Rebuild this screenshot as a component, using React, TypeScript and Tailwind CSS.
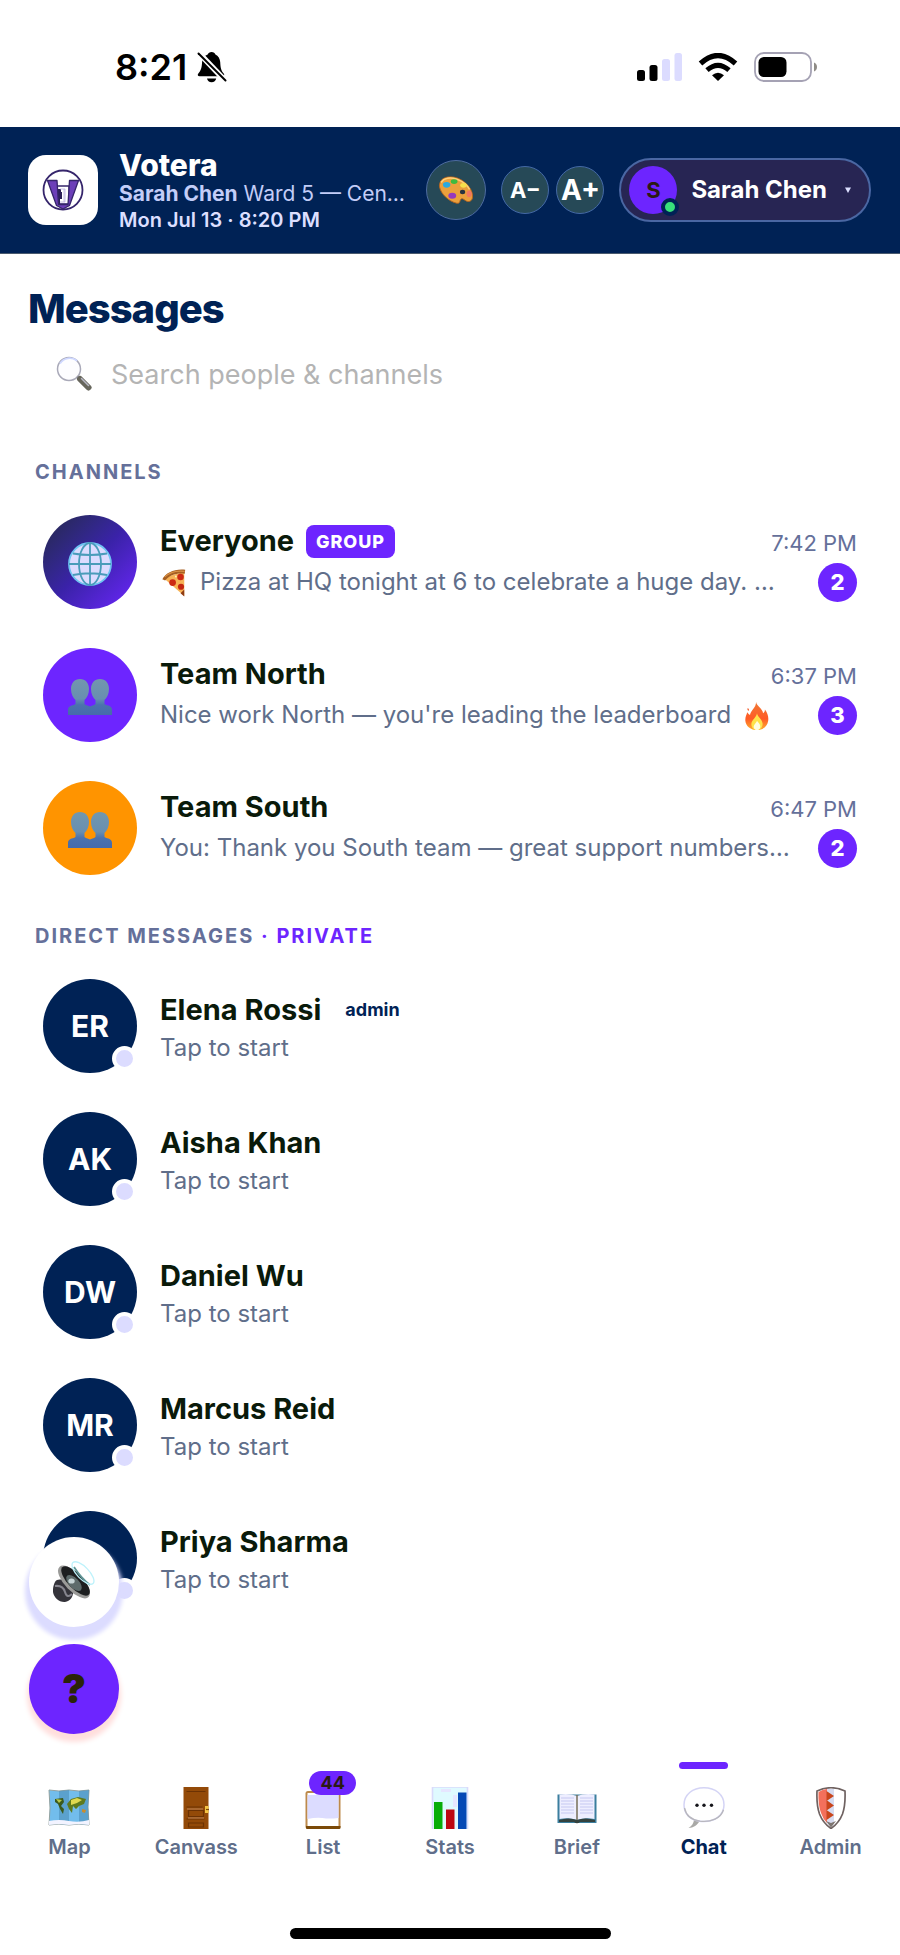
import React, { useState } from 'react';

interface Channel {
  name: string;
  group?: boolean;
  time: string;
  preview: React.ReactNode;
  unread: number;
  avatarClass: string;
  icon: React.ReactNode;
}

interface Contact {
  name: string;
  initials: string;
  role?: string;
}

const BellOffIcon = ({ className }: { className?: string }) => (
  <svg viewBox="0 0 30 32" className={className} aria-hidden="true">
    <path
      d="M14.6 1c-2 0-3.3 1-3.9 2.4C7 4.7 5.3 7.6 5.1 11c-.3 6-1.2 8.5-3.6 11.2-1.3 1.4-.8 3 1 3h23c1.800 0 2.300-1.600 1-3-2.400-2.700-3-5.200-3.300-11.200-.2-3.400-1.900-6.300-4.800-7.600C17.900 2 16.600 1 14.600 1zM10 27.500h9.200c-.4 2.300-2.200 3.700-4.600 3.700S10.400 29.800 10 27.500z"
      fill="#000"
    />
    <path d="M1.500 1.500L28.500 30" stroke="#fff" strokeWidth="5.5" />
    <path d="M1.500 2.500L28.500 29.500" stroke="#000" strokeWidth="2" strokeLinecap="round" />
  </svg>
);

const SignalIcon = ({ className }: { className?: string }) => (
  <svg viewBox="0 0 45 28" className={className} aria-hidden="true">
    <rect x="0" y="17" width="8" height="11" rx="2.5" fill="#000" />
    <rect x="12.5" y="12" width="8" height="16" rx="2.5" fill="#000" />
    <rect x="25" y="6" width="8" height="22" rx="2.5" fill="#dcdcff" />
    <rect x="37.5" y="0" width="7.5" height="28" rx="2.5" fill="#dcdcff" />
  </svg>
);

const WifiIcon = ({ className }: { className?: string }) => (
  <svg viewBox="0 0 40 28" className={className} aria-hidden="true">
    <path d="M2.500 10.500Q20-5.500 37.500 10.500" fill="none" stroke="#000" strokeWidth="5.2" />
    <path d="M9 17.200Q20 7.500 31 17.200" fill="none" stroke="#000" strokeWidth="5" />
    <path d="M14 22.300Q20 17.300 26 22.300L20 28z" fill="#000" />
  </svg>
);

const BatteryIcon = ({ className }: { className?: string }) => (
  <svg viewBox="0 0 64 30" className={className} aria-hidden="true">
    <rect x="1" y="1" width="56" height="28" rx="9" fill="#fff" stroke="#a5a2b4" strokeWidth="1.8" />
    <rect x="4.5" y="5" width="28" height="20" rx="5.5" fill="#000" />
    <path d="M60 10.500c4 1 4 8 0 9z" fill="#8f8c86" />
  </svg>
);

const LogoMark = ({ className }: { className?: string }) => (
  <svg viewBox="0 0 42 42" className={className} aria-hidden="true">
    <circle cx="21" cy="21" r="19.5" fill="#fff" stroke="#35256b" strokeWidth="1.8" />
    <path d="M15 17h12v18H15z" fill="#fff" stroke="#35256b" strokeWidth="1.3" />
    <path d="M15 20h4v3h1v7h-2v5h-3z" fill="#2c2058" />
    <path d="M18 20h5v13h-5M22 20v13" fill="none" stroke="#b9aee0" strokeWidth="0.8" />
    <path d="M5.500 11.500h9.500l1.500 24h9.500l1.500-24h9l-9 25-6.500 3.500-6.500-3.500z" fill="#6c3fb8" stroke="#35256b" strokeWidth="1.3" strokeLinejoin="round" />
  </svg>
);

const PaletteIcon = ({ className }: { className?: string }) => (
  <svg viewBox="0 0 38 32" className={className} aria-hidden="true">
    <path
      d="M2 8C4 2 13 .5 21 3.500c9 3.500 17 13 15.500 21-.6 3-3 4.500-6 3.500-2.500-1-4-3.500-6-2.500-2 1.500-.5 5.500-5 4.500C11 28 3 20 1.500 13c-.4-2 0-3.500.5-5z"
      fill="#eba03c"
      stroke="#b8641d"
      strokeWidth="1"
    />
    <path d="M3 8C6 3 13 2 20 4.500c6 2.200 11 6 13.500 11" fill="none" stroke="#ffd078" strokeWidth="1.6" />
    <ellipse cx="9" cy="10.5" rx="4" ry="3" fill="#2aa9e0" />
    <ellipse cx="17" cy="7" rx="3.6" ry="2.5" fill="#3dba3f" />
    <ellipse cx="27" cy="11" rx="3.5" ry="2.6" fill="#f7e04a" />
    <ellipse cx="33" cy="20" rx="2.8" ry="3.6" fill="#f2785f" />
    <ellipse cx="15" cy="22" rx="4.2" ry="3.2" fill="#9638bd" />
    <ellipse cx="26" cy="18" rx="2.8" ry="2.4" fill="#28333f" />
  </svg>
);

const SearchIcon = ({ className }: { className?: string }) => (
  <svg viewBox="0 0 36 36" className={className} aria-hidden="true">
    <circle cx="13" cy="13" r="11.5" fill="#fdfdff" stroke="#a9a9b8" strokeWidth="1.5" />
    <path d="M4 7.500A11.500 11.500 0 0 1 21 4.800" fill="none" stroke="#cfd8ff" strokeWidth="1.8" />
    <path d="M21 20.500l3 2.500" stroke="#9a9aa6" strokeWidth="2.5" />
    <path d="M24 23l8.500 8.500" stroke="#67665c" strokeWidth="6" strokeLinecap="round" />
    <path d="M25.500 22.500l7 7" stroke="#b9b9c6" strokeWidth="1.5" strokeLinecap="round" />
  </svg>
);

const GlobeIcon = ({ className }: { className?: string }) => (
  <svg viewBox="0 0 44 44" className={className} aria-hidden="true">
    <circle cx="22" cy="22" r="21" fill="#dcdcff" stroke="#6fc4f2" strokeWidth="1.8" />
    <g fill="none" stroke="#4a9cba" strokeWidth="1.8">
      <ellipse cx="22" cy="22" rx="11" ry="21" />
      <path d="M22 1v42M1 22h42M5 11.500Q22 14.500 39 11.500M5 33Q22 29.500 39 33" />
    </g>
  </svg>
);

const PeopleIcon = ({ className }: { className?: string }) => (
  <svg viewBox="0 0 44 36" className={className} aria-hidden="true">
    <defs>
      <linearGradient id="people" x1="0" y1="0" x2="0" y2="1">
        <stop offset="0" stopColor="#7297ae" />
        <stop offset="0.55" stopColor="#688fb0" />
        <stop offset="0.72" stopColor="#4b72ad" />
        <stop offset="1" stopColor="#466bab" />
      </linearGradient>
    </defs>
    <path
      d="M12 0c5.500 0 9 4 9 10 0 5-2 8.500-4.500 11v4c2 1.500 4 1.500 5.500 2.500 1.500-1 3.500-1 5.500-2.500v-4C25 18.500 23 15 23 10c0-6 3.500-10 9-10s9 4 9 10c0 5-2 8.500-4.500 11v4c3.500 2 7.500 1.500 7.500 6v5H0v-5c0-4.500 4-4 7.500-6v-4C5 18.500 3 15 3 10 3 4 6.500 0 12 0z"
      fill="url(#people)"
    />
  </svg>
);

const PizzaIcon = ({ className }: { className?: string }) => (
  <svg viewBox="0 0 26 30" className={className} aria-hidden="true">
    <path d="M1.500 9.500L24 3v26z" fill="#f7b356" />
    <path d="M24 22v7.500l-4-3.500z" fill="#8f3b12" />
    <path d="M.5 11C4 4 14-.5 25 .8l-.5 4.200C15 4 8 7 3.500 12.200z" fill="#a65f22" />
    <path d="M3 8.500C8 3.500 16 1.500 24.500 2.500" fill="none" stroke="#d99245" strokeWidth="1.2" />
    <circle cx="11.5" cy="14.5" r="3.6" fill="#cc2a14" />
    <circle cx="20" cy="8.5" r="3.5" fill="#cc2a14" />
    <circle cx="20.5" cy="19" r="3.3" fill="#c42812" />
    <circle cx="15" cy="8" r="1" fill="#fff0b5" />
  </svg>
);

const FireIcon = ({ className }: { className?: string }) => (
  <svg viewBox="0 0 26 30" className={className} aria-hidden="true">
    <defs>
      <linearGradient id="fire" x1="0" y1="0" x2="0" y2="1">
        <stop offset="0" stopColor="#f07a34" />
        <stop offset="0.6" stopColor="#ff5a26" />
        <stop offset="1" stopColor="#ffb02e" />
      </linearGradient>
    </defs>
    <path d="M12 0c1 5 7 7 7.500 12 1.500-.8 2-2.200 2-4 3 4 4 8 3.500 12-.8 6-5.500 10-12 10S1 26 .5 20c-.3-4 1.500-6.500 2-9 1 1.500 2 2.500 3 3C6 9 12 6.500 12 0z" fill="url(#fire)" />
    <path d="M13 12c.5 4 5.500 6 6 11 .3 4-2.500 7-6 7s-6.500-3-6-7c.5-4 5-6 6-11z" fill="#ffe24a" />
    <path d="M13 20c2 3 4 4 3.500 7-.3 2-1.800 3-3.500 3s-3.400-1-3.500-3c-.2-3 2.500-4 3.500-7z" fill="#fffde0" />
    <path d="M3 6.500q2 .5 1.500 3Q2 9.500 3 6.500z" fill="#f2673a" />
  </svg>
);

const SpeakerIcon = ({ className }: { className?: string }) => (
  <svg viewBox="0 0 42 42" className={className} aria-hidden="true">
    <path d="M2 21c2-3 6-3 9-1l9 9c1 5-2 11-8 12C5 41.500-1 35 0 28c.3-3 1-5 2-7z" fill="#34333a" />
    <path d="M2 25q8-1 10 6t7 2" fill="none" stroke="#86858e" strokeWidth="2" />
    <ellipse cx="21" cy="21" rx="21" ry="9" transform="rotate(46 21 21)" fill="#9a9a98" />
    <ellipse cx="22.5" cy="20" rx="19" ry="7.500" transform="rotate(46 22.500 20)" fill="#1d1f20" />
    <ellipse cx="21" cy="22" rx="10" ry="5" transform="rotate(46 21 22)" fill="#5d6b6b" />
    <ellipse cx="18.5" cy="20" rx="3.2" ry="2.600" fill="#c6d4d6" />
    <path d="M21 6q7 11 16 18" fill="none" stroke="#5f9595" strokeWidth="1.8" />
    <ellipse cx="30" cy="12" rx="14.5" ry="6" transform="rotate(46 30 12)" fill="none" stroke="#bdf2fb" strokeWidth="1.3" />
  </svg>
);

const MapIcon = ({ className }: { className?: string }) => (
  <svg viewBox="0 0 42 42" className={className} aria-hidden="true">
    <path d="M1 3l10 1 10-1 10 1 10-1-1 17 1 18-10-1-10 1-10-1-10 1 1-17z" fill="#72bdec" stroke="#93a2a0" strokeWidth="1" />
    <path d="M11 4l10-1v35l-10-1zM31 4l10-1-1 17 1 18-10-1z" fill="#4f92bd" opacity="0.65" />
    <path d="M1 34q10-2 20 0t20-1v5l-10-1-10 1-10-1-10 1z" fill="#f2f3ff" />
    <path d="M7 12l8-1 1 4-3 4 3 3-1 5-3-5-2-5-3-2z" fill="#3b5a1c" />
    <path d="M19 17l4-5 7-2 8 2-2 5-5 2-3 3-3-3-1 7-3-4z" fill="#5f7a1d" />
    <path d="M23 13l6-2 5 2-5 3-6 2z" fill="#e0d84f" />
    <path d="M8 12l6 1-3 3z" fill="#b9c94a" />
    <path d="M34 22l4 1-1 3-3-1z" fill="#c98d2e" />
  </svg>
);

const DoorIcon = ({ className }: { className?: string }) => (
  <svg viewBox="0 0 42 42" className={className} aria-hidden="true">
    <rect x="8.5" y="0" width="25" height="42" fill="#934a08" />
    <g fill="none" stroke="#6c3203" strokeWidth="1.2">
      <path d="M11.500 4.500h19M11.500 20h16M13.500 23.500h15v6h-15zM11.500 32h18M13.500 36h15v4h-15z" />
    </g>
    <path d="M12 22h16M13 31h16" stroke="#c38a60" strokeWidth="0.9" />
    <rect x="30" y="19" width="3.5" height="7" fill="#f3c444" />
    <path d="M31 22.500h3" stroke="#7b4a05" strokeWidth="1.2" />
  </svg>
);

const ListIcon = ({ className }: { className?: string }) => (
  <svg viewBox="0 0 42 42" className={className} aria-hidden="true">
    <rect x="3.5" y="4" width="35" height="38" rx="2.5" fill="#bd8a4c" />
    <rect x="5.5" y="6" width="31" height="33" fill="#fff" />
    <path d="M5.500 8h31v23q-10 1-16 0t-15 1z" fill="#dcdcff" />
    <path d="M4 39h34.500v2q0 1-1.500 1H5.500Q4 42 4 41z" fill="#7b4a08" />
  </svg>
);

const StatsIcon = ({ className }: { className?: string }) => (
  <svg viewBox="0 0 42 42" className={className} aria-hidden="true">
    <rect x="3.5" y="0" width="35" height="42" fill="#dffaff" />
    <path d="M3.500 0h35v42M3.500 0v42" fill="none" stroke="#d9dbfb" strokeWidth="1.6" />
    <path d="M12 2h10v3H12zM24 8h4v12h-4z" fill="#e6e6ff" />
    <rect x="5" y="15" width="8.5" height="27" fill="#08ad09" />
    <rect x="17" y="22.5" width="8.5" height="19.5" fill="#bd0812" />
    <rect x="29" y="5.5" width="8.5" height="36.5" fill="#0649b5" />
  </svg>
);

const BookIcon = ({ className }: { className?: string }) => (
  <svg viewBox="0 0 42 42" className={className} aria-hidden="true">
    <path d="M1.500 7.500h39V36H1.500z" fill="#3b7e9e" />
    <path d="M3.500 7.500Q13 6 21 9q8-3 17.500-1.500V32Q29 30 21 33q-8-3-17.500-1z" fill="#eeeeff" />
    <path d="M5 11h13M5 14h13M5 17h13M5 20h13M5 23h13M5 26h13M24 11h13M24 14h13M24 17h13M24 20h13M24 23h13M24 26h13" stroke="#c6c7f2" strokeWidth="1.1" />
    <path d="M21 8v25" stroke="#7e7664" strokeWidth="1.6" />
    <path d="M3 33q10-3 18 0 8-3 18 0v2H24q-3 2.500-6 0H3z" fill="#34423f" />
  </svg>
);

const ChatIcon = ({ className }: { className?: string }) => (
  <svg viewBox="0 0 42 42" className={className} aria-hidden="true">
    <path d="M11 32c0 4-2 7-5.500 9 5 0 9-3 11-7z" fill="#a9a9a6" />
    <path d="M21 .8c11.500 0 20 7 20 17s-8.500 16.700-20 16.700c-1.500 0-3 0-4.300-.3C7 33 1 27 1 17.800 1 7.800 9.500.8 21 .8z" fill="#fff" stroke="#d4d4f5" strokeWidth="1.5" />
    <path d="M1.500 21c1.500 7.500 7.500 12 15.500 13.200 11 1.300 21-3 23.500-11.500" fill="none" stroke="#b8b7bd" strokeWidth="1.3" />
    <g fill="#15151a">
      <circle cx="14" cy="18.3" r="1.7" />
      <circle cx="21" cy="18.3" r="1.7" />
      <circle cx="28.5" cy="18.3" r="1.7" />
    </g>
  </svg>
);

const ShieldIcon = ({ className }: { className?: string }) => (
  <svg viewBox="0 0 42 42" className={className} aria-hidden="true">
    <path d="M7 4Q21-2.500 35 4q.6 14-2.500 23Q29 36 21 41.500 13 36 9.500 27 6.400 18 7 4z" fill="#fff" stroke="#6f6261" strokeWidth="1.7" />
    <path d="M8.500 5Q13 2 18 1.800l-1 3V36Q13 32 11 26 8 18 8.500 5z" fill="#f3705c" />
    <path d="M17 2h7v35l-3 3-4-4z" fill="#d7dbf0" />
    <path d="M16.500 4l7.500 5-7.500 5zM16.500 13l7.500 5.500-7.500 5zM16.500 23l7.500 5-7.500 5z" fill="#c8461d" />
    <path d="M16 34l5 6.500 5-6.500-5 2z" fill="#7e7570" />
  </svg>
);

const channels: Channel[] = [
  {
    name: 'Everyone',
    group: true,
    time: '7:42 PM',
    preview: (
      <>
        <PizzaIcon className="mr-3 inline-block h-7 w-7 align-middle" />
        Pizza at HQ tonight at 6 to celebrate a huge day. …
      </>
    ),
    unread: 2,
    avatarClass: 'bg-linear-135 from-[#25264a] via-[#3a22a8] to-[#6d25ff]',
    icon: <GlobeIcon className="h-11 w-11" />,
  },
  {
    name: 'Team North',
    time: '6:37 PM',
    preview: (
      <>
        Nice work North — you're leading the leaderboard
        <FireIcon className="ml-3 inline-block h-7 w-7 align-middle" />
      </>
    ),
    unread: 3,
    avatarClass: 'bg-[#6d25ff]',
    icon: <PeopleIcon className="h-9 w-11" />,
  },
  {
    name: 'Team South',
    time: '6:47 PM',
    preview: 'You: Thank you South team — great support numbers…',
    unread: 2,
    avatarClass: 'bg-[#ff9400]',
    icon: <PeopleIcon className="h-9 w-11" />,
  },
];

const contacts: Contact[] = [
  { name: 'Elena Rossi', initials: 'ER', role: 'admin' },
  { name: 'Aisha Khan', initials: 'AK' },
  { name: 'Daniel Wu', initials: 'DW' },
  { name: 'Marcus Reid', initials: 'MR' },
  { name: 'Priya Sharma', initials: '' },
];

const tabs = [
  { label: 'Map', Icon: MapIcon },
  { label: 'Canvass', Icon: DoorIcon },
  { label: 'List', Icon: ListIcon, badge: 44 },
  { label: 'Stats', Icon: StatsIcon },
  { label: 'Brief', Icon: BookIcon },
  { label: 'Chat', Icon: ChatIcon },
  { label: 'Admin', Icon: ShieldIcon },
];

const StatusBar = () => (
  <div className="flex h-[127px] items-center justify-between pt-1.5 pr-[82px] pl-[115px]">
    <div className="flex items-center gap-2.5">
      <span className="text-4xl font-semibold text-black">8:21</span>
      <BellOffIcon className="h-8 w-[30px]" />
    </div>
    <div className="flex items-center gap-4">
      <SignalIcon className="h-7 w-[45px]" />
      <WifiIcon className="h-7 w-10" />
      <BatteryIcon className="h-[30px] w-16" />
    </div>
  </div>
);

const Header = () => (
  <header className="flex h-[127px] items-center gap-[15px] border-b border-[#4a5a6e] bg-[#002255] pr-[29px] pl-7">
    <div className="mr-1.5 flex h-[70px] w-[70px] shrink-0 items-center justify-center rounded-[18px] bg-white">
      <LogoMark className="h-[42px] w-[42px]" />
    </div>
    <div className="min-w-0 flex-1 pt-0.5">
      <div className="text-3xl leading-[32px] font-extrabold text-white">Votera</div>
      <div className="truncate text-[21px] leading-[26px] text-[#c3cdf8]">
        <span className="font-bold">Sarah Chen</span> Ward 5 — Cen…
      </div>
      <div className="text-xl leading-[26px] font-semibold text-[#dcdfff]">Mon Jul 13 · 8:20 PM</div>
    </div>
    <button aria-label="Theme" className="flex h-[60px] w-[60px] shrink-0 items-center justify-center rounded-full border border-[#4d6ba0] bg-[#264957]">
      <PaletteIcon className="h-[30px] w-9" />
    </button>
    <div className="flex shrink-0 gap-[7px] font-bold text-white">
      <button aria-label="Smaller text" className="h-12 w-12 rounded-full border border-[#4469a5] bg-[#264957] text-[22px]">
        A−
      </button>
      <button aria-label="Larger text" className="h-12 w-12 rounded-full border border-[#4469a5] bg-[#264957] text-[28px] leading-none">
        A+
      </button>
    </div>
    <button className="flex h-16 shrink-0 items-center gap-3.5 rounded-full border-2 border-[#4a67a3] bg-[#272553] pr-[18px] pl-2">
      <span className="relative flex h-12 w-12 items-center justify-center rounded-full bg-[#6d25ff] text-[22px] font-bold text-[#2b1a14]">
        S
        <span className="absolute -right-0.5 -bottom-0.5 h-[18px] w-[18px] rounded-full border-4 border-[#002255] bg-[#38e07b]" />
      </span>
      <span className="text-2xl font-bold text-white">Sarah Chen</span>
      <svg viewBox="0 0 6 6" className="ml-1 h-1.5 w-1.5" aria-hidden="true">
        <path d="M0 .5h6L3 6z" fill="#dcdfff" />
      </svg>
    </button>
  </header>
);

const ChannelRow = ({ channel }: { channel: Channel }) => (
  <li>
    <button className="flex h-[133px] w-full items-center gap-[23px] text-left">
      <span className={`flex h-[94px] w-[94px] shrink-0 items-center justify-center rounded-full pt-1 ${channel.avatarClass}`}>{channel.icon}</span>
      <span className="min-w-0 flex-1">
        <span className="flex items-center">
          <span className="text-[29px] leading-10 font-bold text-[#0a1a0a]">{channel.name}</span>
          {channel.group && <span className="ml-3 rounded-lg bg-[#6d25ff] px-2.5 text-lg leading-[33px] font-extrabold tracking-wider text-white">GROUP</span>}
          <span className="ml-auto pt-1 text-[22px] leading-9 text-[#65709a]">{channel.time}</span>
        </span>
        <span className="flex items-center gap-5 pt-px">
          <span className="flex-1 truncate text-2xl leading-10 text-[#606e8a]">{channel.preview}</span>
          <span className="flex h-[39px] w-[39px] shrink-0 items-center justify-center rounded-full bg-[#6d25ff] text-[22px] font-extrabold text-white">{channel.unread}</span>
        </span>
      </span>
    </button>
  </li>
);

const ContactRow = ({ contact }: { contact: Contact }) => (
  <li>
    <button className="flex h-[133px] w-full items-center gap-[23px] text-left">
      <span className="relative flex h-[94px] w-[94px] shrink-0 items-center justify-center rounded-full bg-[#002255] text-3xl font-bold text-white">
        {contact.initials}
        <span className="absolute right-0 bottom-0.5 h-[25px] w-[25px] rounded-full border-4 border-white bg-[#dcdcff]" />
      </span>
      <span className="min-w-0 flex-1 pt-1">
        <span className="flex items-center gap-6">
          <span className="text-[29px] leading-10 font-bold text-[#0a1a0a]">{contact.name}</span>
          {contact.role && <span className="text-lg font-bold text-[#002255]">{contact.role}</span>}
        </span>
        <span className="block text-2xl leading-9 text-[#606e8a]">Tap to start</span>
      </span>
    </button>
  </li>
);

const TabBar = ({ active, onChange }: { active: string; onChange: (label: string) => void }) => (
  <nav className="flex px-1.5">
    {tabs.map(({ label, Icon, badge }) => (
      <button
        key={label}
        onClick={() => onChange(label)}
        className={`flex flex-1 flex-col items-center text-xl leading-7 ${active === label ? 'font-bold text-[#002255]' : 'font-semibold text-[#606e8a]'}`}
      >
        <span className={`mb-[18px] h-[7px] w-[49px] rounded-full ${active === label ? 'bg-[#6d25ff]' : ''}`} />
        <span className="relative mb-1">
          <Icon className="h-[42px] w-[42px]" />
          {badge && <span className="absolute -top-4 left-[7px] w-[47px] rounded-full bg-[#6d25ff] text-center text-lg leading-6 font-bold text-[#2b1a14]">{badge}</span>}
        </span>
        {label}
      </button>
    ))}
  </nav>
);

const App: React.FC = () => {
  const [query, setQuery] = useState('');
  const [activeTab, setActiveTab] = useState('Chat');

  const matches = (name: string) => name.toLowerCase().includes(query.toLowerCase());

  return (
    <div className="relative flex min-h-screen flex-col bg-white font-[Inter,'Liberation_Sans',sans-serif]">
      <StatusBar />
      <Header />

      <main className="flex-1">
        <h1 className="px-7 pt-[30px] text-[40px] leading-[50px] font-extrabold tracking-tight text-[#002255]">Messages</h1>
        <label className="mt-3.5 flex items-center gap-[19px] px-14">
          <SearchIcon className="h-9 w-9 shrink-0" />
          <input
            type="search"
            aria-label="Search people and channels"
            value={query}
            onChange={(e) => setQuery(e.target.value)}
            placeholder="Search people & channels"
            className="h-[52px] w-full text-[27px] outline-none placeholder:text-[#b4b4b4]"
          />
        </label>

        <section>
          <h2 className="mt-[58px] px-[35px] text-xl leading-7 font-bold tracking-widest text-[#65709a]">CHANNELS</h2>
          <ul className="mt-[9px] pr-[43px] pl-[43px]">
            {channels.filter((c) => matches(c.name)).map((channel) => (
              <ChannelRow key={channel.name} channel={channel} />
            ))}
          </ul>
        </section>

        <section>
          <h2 className="mt-7 px-[35px] text-xl leading-7 font-bold tracking-widest text-[#65709a]">
            DIRECT MESSAGES <span className="text-[#6d25ff]">· PRIVATE</span>
          </h2>
          <ul className="mt-[9px] pr-[43px] pl-[43px]">
            {contacts.filter((c) => matches(c.name)).map((contact) => (
              <ContactRow key={contact.name} contact={contact} />
            ))}
          </ul>
        </section>
      </main>

      {/* floating actions sit over the list */}
      <div className="absolute bottom-[221px] left-[29px] flex flex-col gap-[17px]">
        <button aria-label="Sound" className="flex h-[90px] w-[90px] items-center justify-center rounded-full bg-white shadow-[0_9px_4px_4px_#dcdcff]">
          <SpeakerIcon className="h-[42px] w-[42px]" />
        </button>
        <button aria-label="Help" className="h-[90px] w-[90px] rounded-full bg-[#6d25ff] text-[40px] font-black text-[#2b2408] shadow-[0_6px_5px_2px_#ffdfdd]">
          ?
        </button>
      </div>

      <TabBar active={activeTab} onChange={setActiveTab} />
      <div className="mx-auto mt-[67px] mb-4 h-[11px] w-[321px] rounded-full bg-black" />
    </div>
  );
};

export default App;
